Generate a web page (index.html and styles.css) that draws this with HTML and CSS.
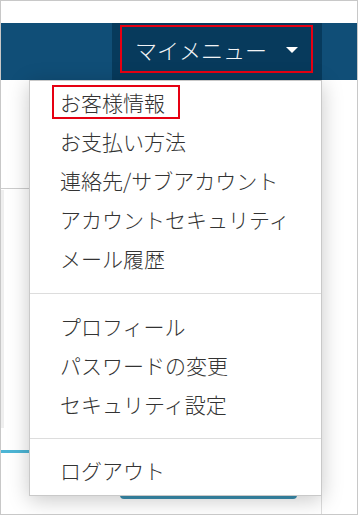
FILE: index.html
```html
<!DOCTYPE html>
<html lang="ja">
  <head>
    <meta charset="UTF-8" />
    <meta name="viewport" content="width=device-width, initial-scale=1.0" />
    <title>マイメニュー</title>
    <link rel="stylesheet" href="styles.css">
  </head>
  <body>
    <div class="frame">
      <!-- ヘッダー -->
      <header class="topbar">
        <div class="mymenu">
          <div class="mymenu-label">
            <span>マイメニュー</span>
            <span class="caret"></span>
          </div>

          <!-- ドロップダウン -->
          <div class="dropdown">
            <ul class="group group1">
              <li><span class="mark">お客様情報</span></li>
              <li>お支払い方法</li>
              <li>連絡先/サブアカウント</li>
              <li>アカウントセキュリティ</li>
              <li>メール履歴</li>
            </ul>
            <ul class="group group2">
              <li>プロフィール</li>
              <li>パスワードの変更</li>
              <li>セキュリティ設定</li>
            </ul>
            <ul class="group group3">
              <li>ログアウト</li>
            </ul>
          </div>
        </div>
      </header>

      <!-- 背面のページ -->
      <div class="content">
        <div class="rule"></div>
        <div class="side"></div>
        <div class="tab"></div>
        <div class="lower">
          <div class="btn"></div>
        </div>
      </div>
    </div>
  </body>
</html>
```

FILE: styles.css
```css
body {
  margin: 0;
  font-family: "Noto Sans CJK JP", "Noto Sans", sans-serif;
  font-weight: 300;
  color: #333;
}
ul {
  list-style: none;
  margin: 0;
  padding: 0;
}
.frame {
  width: 358px;
  height: 515px;
  box-sizing: border-box;
  border: 1px solid #c8c8c8;
  overflow: hidden;
}

/* ヘッダー */
.topbar {
  margin-top: 22px;
  height: 57px;
  background-color: #104e77;
  display: flex;
  justify-content: flex-end;
  padding-right: 35px;
}
.mymenu {
  position: relative;
  width: 210px;
  box-sizing: border-box;
  padding: 2px 9px 7px 8px;
  background-color: #073a5c;
}
.mymenu-label {
  height: 100%;
  box-sizing: border-box;
  border: 2px solid #e60012;
  display: flex;
  align-items: center;
  justify-content: space-between;
  padding: 0 13px 0 13px;
  color: #f2f4f6;
  font-size: 22px;
}
.caret {
  width: 0;
  height: 0;
  border-left: 6px solid transparent;
  border-right: 6px solid transparent;
  border-top: 6px solid #fff;
  margin-top: 2px;
}

/* ドロップダウン */
.dropdown {
  position: absolute;
  top: 100%;
  right: 0;
  width: 293px;
  box-sizing: border-box;
  background-color: #fff;
  border: 1px solid #c9c9c9;
  box-shadow: 0 4px 20px rgba(0, 0, 0, 0.22);
  z-index: 2;
}
.group li {
  height: 39px;
  display: flex;
  align-items: center;
  padding-left: 30px;
  font-size: 21px;
  color: #333;
}
.group1 {
  padding: 1px 0 16px;
}
.group2 {
  border-top: 1px solid #ddd;
  padding: 12px 0 15px;
}
.group3 {
  border-top: 1px solid #ddd;
  padding: 11px 0 6px;
}
.mark {
  display: inline-block;
  height: 34px;
  line-height: 30px;
  box-sizing: border-box;
  border: 2px solid #e60012;
  padding: 0 13px 0 6px;
  margin-left: -8px;
}

/* 背面 */
.content {
  width: 321px;
}
.rule {
  margin-top: 108px;
  height: 1px;
  background-color: #ccc;
}
.side {
  margin-top: 1px;
  width: 3px;
  height: 238px;
  background-color: #efefef;
}
.tab {
  margin-top: 22px;
  width: 28px;
  height: 3px;
  background-color: #4cb5d5;
}
.lower {
  height: 61px;
  border-right: 1px solid #ddd;
  padding-left: 119px;
}
.btn {
  width: 177px;
  height: 46px;
  background-color: #3a8fb0;
  border-radius: 0 0 4px 4px;
}
```
